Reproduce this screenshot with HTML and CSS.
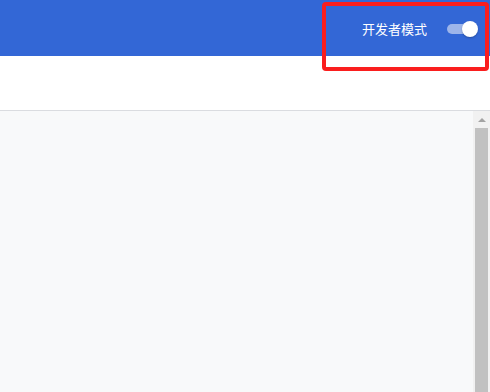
FILE: index.html
```html
<!DOCTYPE html>
<html lang="zh-CN">
<head>
<meta charset="utf-8">
<title>扩展程序</title>
<link rel="stylesheet" href="styles.css">
</head>
<body>
<div class="page">
  <header class="topbar">
    <span class="dev-label">开发者模式</span>
    <span class="toggle" role="switch" aria-checked="true">
      <span class="toggle-track"></span>
      <span class="toggle-knob"></span>
    </span>
  </header>
  <div class="toolbar"></div>
  <div class="content-row">
    <main class="content"></main>
    <div class="scrollbar">
      <div class="scroll-arrow"><span class="arrow-up"></span></div>
      <div class="scroll-thumb"></div>
    </div>
  </div>
  <div class="highlight"></div>
</div>
</body>
</html>
```
FILE: styles.css
```css
* { box-sizing: border-box; }
html, body { margin: 0; padding: 0; }
body {
  width: 490px;
  height: 392px;
  overflow: hidden;
  font-family: "Noto Sans CJK SC", "Noto Sans", sans-serif;
  background: #ffffff;
}
.page {
  position: relative;
  display: flex;
  flex-direction: column;
  height: 392px;
}
.topbar {
  height: 56px;
  flex: none;
  background: #3367d6;
  display: flex;
  align-items: center;
  justify-content: flex-end;
  padding-right: 12px;
}
.dev-label {
  color: #ffffff;
  font-size: 13px;
  line-height: 16px;
  margin-right: 20px;
  margin-top: 1px;
}
.toggle {
  position: relative;
  width: 31px;
  height: 16px;
  margin-top: 1px;
}
.toggle-track {
  position: absolute;
  left: 0;
  top: 3px;
  width: 27px;
  height: 10px;
  border-radius: 5px;
  background: #9db5ea;
}
.toggle-knob {
  position: absolute;
  right: 0;
  top: 0;
  width: 16px;
  height: 16px;
  border-radius: 50%;
  background: #ffffff;
  box-shadow: 0 1px 2px rgba(0,0,0,0.25);
}
.toolbar {
  height: 55px;
  flex: none;
  background: #ffffff;
  border-bottom: 1px solid #dadce0;
}
.content-row {
  flex: 1;
  display: flex;
  min-height: 0;
}
.content {
  flex: 1;
  background: #f8f9fa;
}
.scrollbar {
  width: 17px;
  flex: none;
  background: #f1f1f1;
  display: flex;
  flex-direction: column;
  align-items: center;
}
.scroll-arrow {
  height: 17px;
  width: 17px;
  display: flex;
  align-items: center;
  justify-content: center;
  flex: none;
}
.arrow-up {
  width: 0;
  height: 0;
  border-left: 4px solid transparent;
  border-right: 4px solid transparent;
  border-bottom: 4px solid #a3a3a3;
}
.scroll-thumb {
  flex: 1;
  width: 13px;
  background: #c1c1c1;
}
.highlight {
  position: absolute;
  left: 322px;
  top: 2px;
  width: 167px;
  height: 69px;
  border: 4px solid #fa1e1e;
  border-radius: 4px;
}
```
